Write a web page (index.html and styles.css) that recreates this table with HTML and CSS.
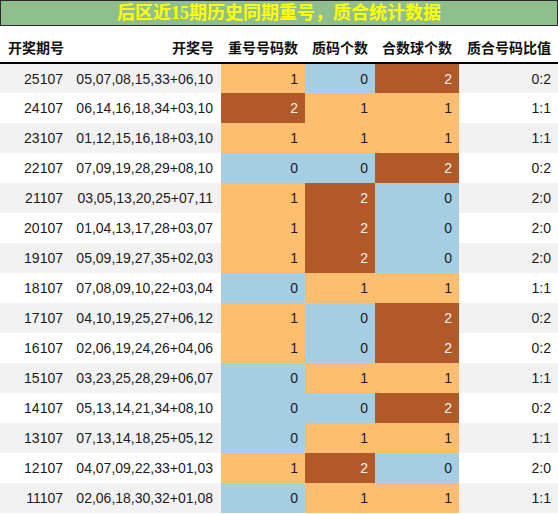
FILE: index.html
```html
<!DOCTYPE html>
<html lang="zh-CN">
<head>
  <meta charset="UTF-8" />
  <title>后区近15期历史同期重号</title>
  <link rel="stylesheet" href="styles.css">
</head>
<body>

  <div class="title">后区近15期历史同期重号，质合统计数据</div>

  <table class="stats">
    <colgroup>
      <col class="c-issue">
      <col class="c-nums">
      <col class="c-rep">
      <col class="c-prime">
      <col class="c-comp">
      <col class="c-ratio">
    </colgroup>
    <thead>
      <tr>
        <th class="left">开奖期号</th>
        <th>开奖号</th>
        <th>重号号码数</th>
        <th>质码个数</th>
        <th>合数球个数</th>
        <th>质合号码比值</th>
      </tr>
    </thead>
    <tbody>
      <tr><td>25107</td><td>05,07,08,15,33+06,10</td><td class="v1">1</td><td class="v0">0</td><td class="v2">2</td><td>0:2</td></tr>
      <tr><td>24107</td><td>06,14,16,18,34+03,10</td><td class="v2">2</td><td class="v1">1</td><td class="v1">1</td><td>1:1</td></tr>
      <tr><td>23107</td><td>01,12,15,16,18+03,10</td><td class="v1">1</td><td class="v1">1</td><td class="v1">1</td><td>1:1</td></tr>
      <tr><td>22107</td><td>07,09,19,28,29+08,10</td><td class="v0">0</td><td class="v0">0</td><td class="v2">2</td><td>0:2</td></tr>
      <tr><td>21107</td><td>03,05,13,20,25+07,11</td><td class="v1">1</td><td class="v2">2</td><td class="v0">0</td><td>2:0</td></tr>
      <tr><td>20107</td><td>01,04,13,17,28+03,07</td><td class="v1">1</td><td class="v2">2</td><td class="v0">0</td><td>2:0</td></tr>
      <tr><td>19107</td><td>05,09,19,27,35+02,03</td><td class="v1">1</td><td class="v2">2</td><td class="v0">0</td><td>2:0</td></tr>
      <tr><td>18107</td><td>07,08,09,10,22+03,04</td><td class="v0">0</td><td class="v1">1</td><td class="v1">1</td><td>1:1</td></tr>
      <tr><td>17107</td><td>04,10,19,25,27+06,12</td><td class="v1">1</td><td class="v0">0</td><td class="v2">2</td><td>0:2</td></tr>
      <tr><td>16107</td><td>02,06,19,24,26+04,06</td><td class="v1">1</td><td class="v0">0</td><td class="v2">2</td><td>0:2</td></tr>
      <tr><td>15107</td><td>03,23,25,28,29+06,07</td><td class="v0">0</td><td class="v1">1</td><td class="v1">1</td><td>1:1</td></tr>
      <tr><td>14107</td><td>05,13,14,21,34+08,10</td><td class="v0">0</td><td class="v0">0</td><td class="v2">2</td><td>0:2</td></tr>
      <tr><td>13107</td><td>07,13,14,18,25+05,12</td><td class="v0">0</td><td class="v1">1</td><td class="v1">1</td><td>1:1</td></tr>
      <tr><td>12107</td><td>04,07,09,22,33+01,03</td><td class="v1">1</td><td class="v2">2</td><td class="v0">0</td><td>2:0</td></tr>
      <tr><td>11107</td><td>02,06,18,30,32+01,08</td><td class="v0">0</td><td class="v1">1</td><td class="v1">1</td><td>1:1</td></tr>
    </tbody>
  </table>

</body>
</html>
```
FILE: styles.css
```css
body {
  margin: 0;
  padding: 0;
  background: #fff;
  font-family: "Liberation Sans", "Noto Sans CJK SC", sans-serif;
  color: #1a1a1a;
}

.title {
  height: 24px;
  line-height: 24px;
  background: #8fbf8d;
  border: 1px solid #2b2b2b;
  color: #ffff00;
  font-family: "Liberation Serif", "Noto Sans CJK SC", serif;
  font-weight: bold;
  font-size: 18px;
  text-align: center;
}

.stats {
  width: 558px;
  border-collapse: collapse;
  table-layout: fixed;
  font-size: 14px;
}

.c-issue { width: 71px; }
.c-nums  { width: 150px; }
.c-rep   { width: 84px; }
.c-prime { width: 70px; }
.c-comp  { width: 84px; }
.c-ratio { width: 99px; }

th {
  height: 37px;
  padding: 6px 7px 0 0;
  box-sizing: border-box;
  font-weight: bold;
  font-size: 14px;
  color: #111;
  text-align: right;
  border-bottom: 2px solid #000;
  white-space: nowrap;
}

th.left {
  text-align: left;
  padding-left: 8px;
}

td {
  height: 30px;
  padding: 0 7px 0 0;
  box-sizing: border-box;
  text-align: right;
  white-space: nowrap;
}

td:nth-child(1),
td:nth-child(2) {
  padding-right: 8px;
}

tbody tr:nth-child(odd) {
  background: #f2f2f2;
}

.v0 { background: #a6cee3; }
.v1 { background: #fdbf6f; }
.v2 { background: #b15928; color: #f2f2f2; }
```
